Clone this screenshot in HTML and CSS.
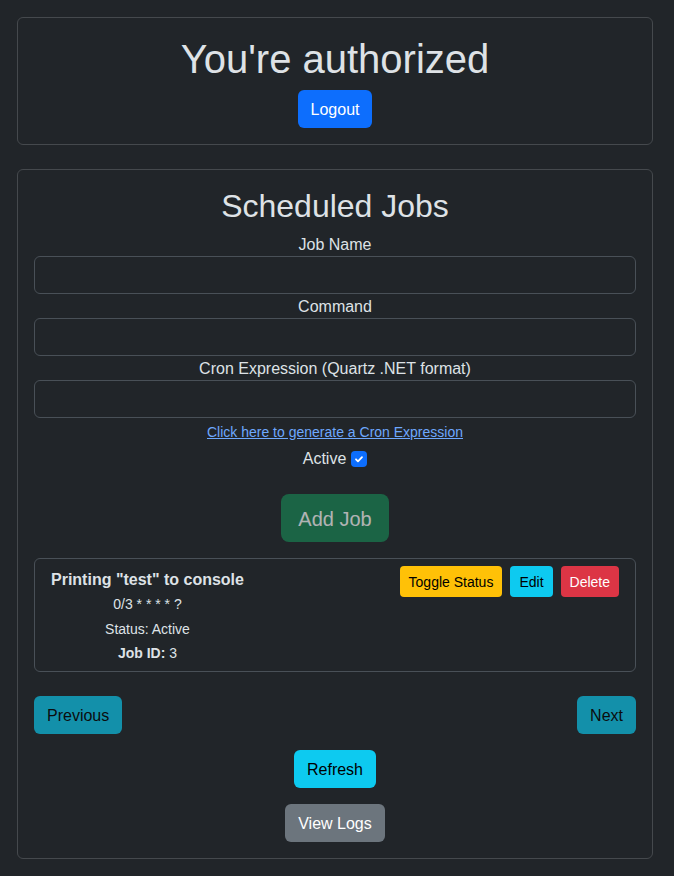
FILE: index.html
```html
<!DOCTYPE html>
<html lang="en">
<head>
<meta charset="utf-8">
<title>Scheduled Jobs</title>
<link rel="stylesheet" href="styles.css">
</head>
<body>
<div class="page">
  <section class="card auth-card">
    <h1 class="title-xl">You're authorized</h1>
    <button class="btn btn-primary">Logout</button>
  </section>

  <section class="card jobs-card">
    <h2 class="title-lg">Scheduled Jobs</h2>
    <form class="job-form">
      <label class="field-label">Job Name</label>
      <input class="field-input" type="text">
      <label class="field-label">Command</label>
      <input class="field-input" type="text">
      <label class="field-label">Cron Expression (Quartz .NET format)</label>
      <input class="field-input" type="text">
      <div class="link-row"><a href="#" class="cron-link">Click here to generate a Cron Expression</a></div>
      <div class="active-row">
        <span>Active</span>
        <span class="checkbox"><svg width="12" height="12" viewBox="0 0 20 20"><path d="M5 10.5l3.3 3.3L15 7" fill="none" stroke="#fff" stroke-width="3" stroke-linecap="round" stroke-linejoin="round"/></svg></span>
      </div>
      <div class="add-row"><button type="button" class="btn btn-lg btn-success disabled">Add Job</button></div>
    </form>

    <div class="job-item">
      <div class="job-info">
        <div class="job-name">Printing "test" to console</div>
        <div class="job-line">0/3 * * * * ?</div>
        <div class="job-line">Status: Active</div>
        <div class="job-line"><strong>Job ID:</strong> 3</div>
      </div>
      <div class="job-actions">
        <button class="btn btn-sm btn-warning">Toggle Status</button>
        <button class="btn btn-sm btn-info">Edit</button>
        <button class="btn btn-sm btn-danger">Delete</button>
      </div>
    </div>

    <div class="pager">
      <button class="btn btn-info disabled">Previous</button>
      <button class="btn btn-info disabled">Next</button>
    </div>
    <div class="center-row"><button class="btn btn-info">Refresh</button></div>
    <div class="center-row"><button class="btn btn-secondary">View Logs</button></div>
  </section>
</div>
</body>
</html>
```

FILE: styles.css
```css
html, body {
  margin: 0;
  background: #212529;
  color: #dee2e6;
  font-family: "Liberation Sans", Arial, sans-serif;
  font-size: 16px;
  line-height: 1.5;
}

.page {
  padding: 17px 21px 17px 17px;
  display: flex;
  flex-direction: column;
  gap: 24px;
}

.card {
  border: 1px solid #45494d;
  border-radius: 6px;
  padding: 16px;
  display: flex;
  flex-direction: column;
  align-items: center;
  text-align: center;
}

.title-xl {
  margin: 0 0 8px;
  padding-top: 3px;
  font-size: 40px;
  font-weight: 400;
  line-height: 45px;
  color: #dee2e6;
}

.title-lg {
  margin: 0 0 8px;
  padding-top: 3px;
  font-size: 32px;
  font-weight: 400;
  line-height: 35px;
  color: #dee2e6;
}

.btn {
  font-family: inherit;
  font-size: 16px;
  line-height: 24px;
  padding: 7px 12px 5px;
  border: 1px solid transparent;
  border-radius: 6px;
  cursor: pointer;
}
.btn-lg {
  font-size: 20px;
  line-height: 30px;
  padding: 9px 16px 7px;
  border-radius: 8px;
}
.btn-sm {
  font-size: 14px;
  line-height: 21px;
  padding: 5px 8px 3px;
  border-radius: 4px;
}
.btn-primary { background: #0d6efd; color: #fff; }
.btn-success { background: #198754; color: #fff; }
.btn-warning { background: #ffc107; color: #000; }
.btn-info { background: #0dcaf0; color: #000; }
.btn-danger { background: #dc3545; color: #fff; }
.btn-secondary { background: #6c757d; color: #fff; }
.btn.disabled { opacity: 0.65; }

.job-form {
  width: 100%;
  display: flex;
  flex-direction: column;
  align-items: center;
}
.field-label {
  display: block;
  padding-top: 2px;
  line-height: 22px;
}
.field-input {
  box-sizing: border-box;
  width: 100%;
  height: 38px;
  background: #212529;
  border: 1px solid #495057;
  border-radius: 6px;
  color: #dee2e6;
  font: inherit;
  padding: 6px 12px;
}

.link-row {
  margin-top: 4px;
  font-size: 14px;
  line-height: 21px;
}
.cron-link {
  color: #6ea8fe;
  text-decoration: underline;
}

.active-row {
  margin-top: 4px;
  display: flex;
  align-items: center;
  gap: 5px;
  line-height: 24px;
}
.checkbox {
  width: 16px;
  height: 16px;
  border-radius: 4px;
  background: #0d6efd;
  display: flex;
  align-items: center;
  justify-content: center;
}

.add-row {
  margin-top: 23px;
}

.job-item {
  box-sizing: border-box;
  width: 100%;
  margin-top: 16px;
  border: 1px solid #495057;
  border-radius: 6px;
  padding: 8px 16px 5px;
  display: flex;
  justify-content: space-between;
  align-items: flex-start;
}
.job-info {
  display: flex;
  flex-direction: column;
  align-items: center;
  padding-top: 1px;
}
.job-name {
  font-weight: 700;
  font-size: 16px;
  line-height: 24px;
}
.job-line {
  font-size: 14px;
  line-height: 24.5px;
}
.job-actions {
  display: flex;
  gap: 8px;
  margin-top: -1px;
}

.pager {
  width: 100%;
  margin-top: 24px;
  display: flex;
  justify-content: space-between;
}
.center-row {
  margin-top: 16px;
}
```
